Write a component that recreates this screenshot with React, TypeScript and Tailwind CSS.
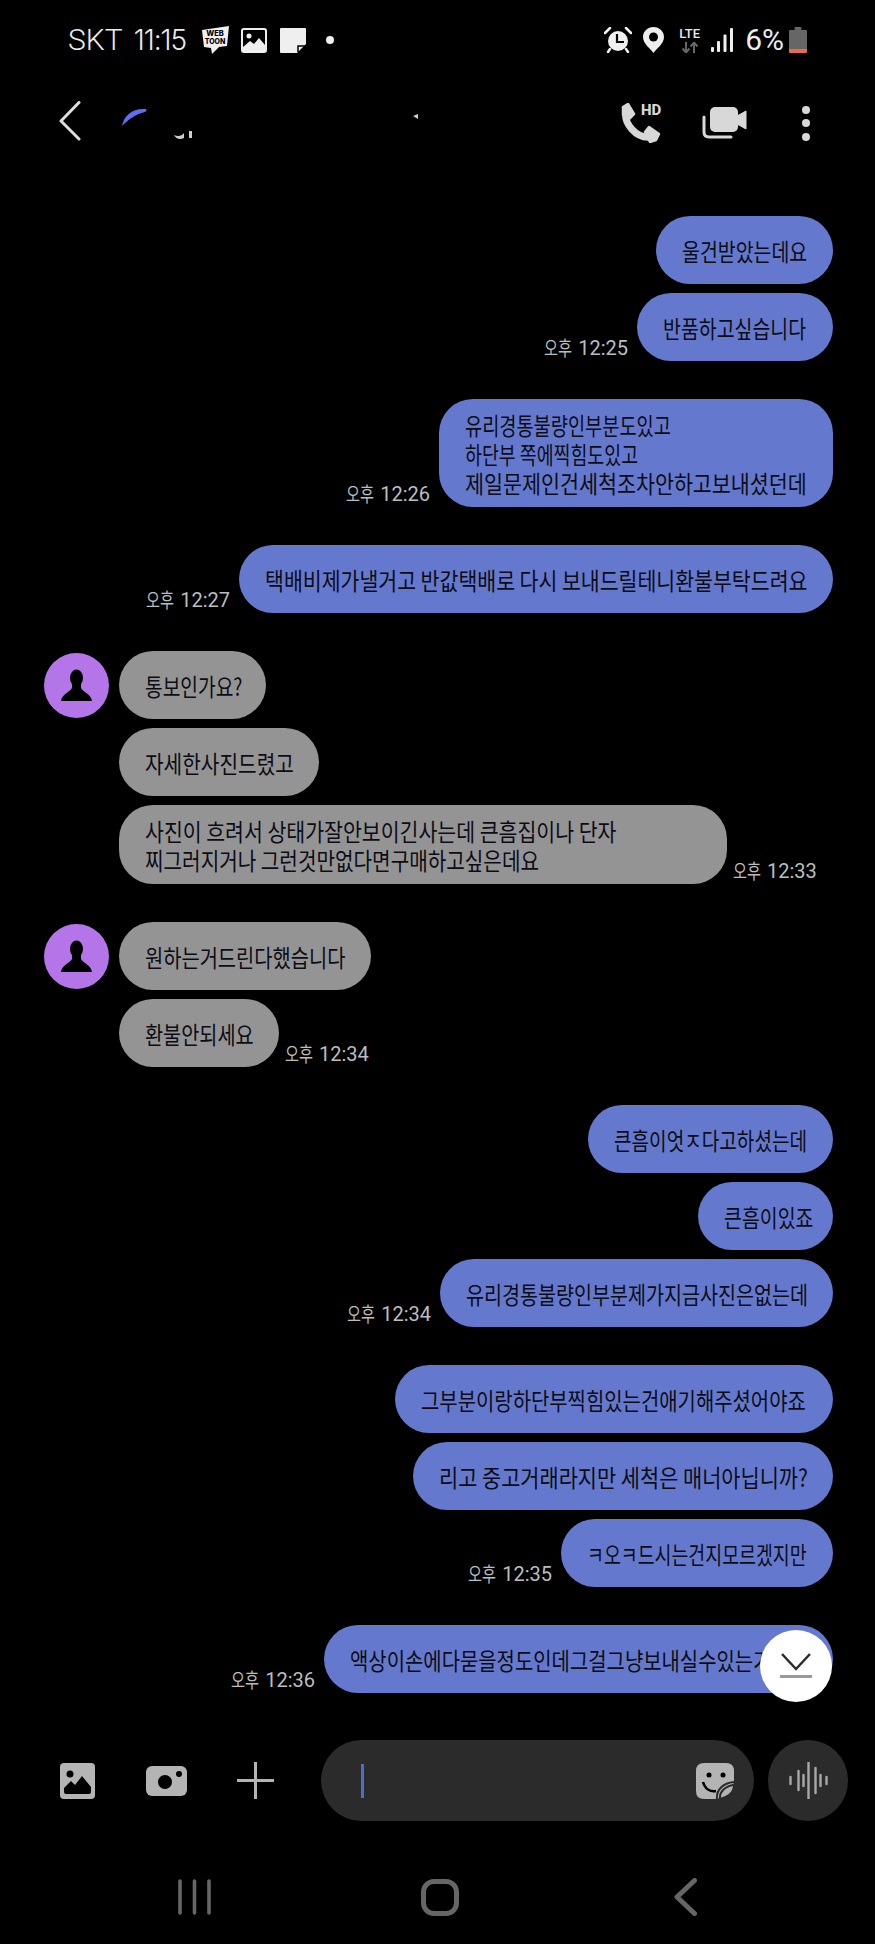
import React from "react";

const KR = "font-['Noto_Sans_CJK_KR',sans-serif]";

function Time({ t }: { t: string }) {
  return (
    <div className="flex items-center gap-[7px] h-[24px] mb-[1px] text-[20px] leading-[24px] text-[#bdbdbd] font-['Roboto',sans-serif] whitespace-nowrap">
      <span className={`inline-block w-[27px] h-[24px] origin-left scale-x-[0.76] ${KR}`}>오후</span>
      <span>{t}</span>
    </div>
  );
}

function Bubble({ lines, w, h = "h-[68px]", blue = true }: { lines: [string, string][]; w: string; h?: string; blue?: boolean }) {
  return (
    <div className={`${w} ${h} ${blue ? "bg-[#6479cd]" : "bg-[#949494]"} rounded-[34px] flex flex-col justify-center pl-[26px] overflow-hidden shrink-0`}>
      {lines.map(([l, sx]) => (
        <div key={l} className={`origin-left ${sx} whitespace-nowrap text-[24px] leading-[29px] text-[#0c0c14] ${KR}`}>{l}</div>
      ))}
    </div>
  );
}

function Out({ time, children }: { time?: string; children: React.ReactNode }) {
  return (
    <div className="flex justify-end items-end gap-[9px] pr-[42px]">
      {time && <Time t={time} />}
      {children}
    </div>
  );
}

function Avatar() {
  return (
    <div className="w-[65px] h-[65px] mt-[2px] rounded-full bg-[#b475e9] shrink-0 flex items-center justify-center">
      <svg width="65" height="65" viewBox="0 0 65 65">
        <ellipse cx="32.5" cy="25" rx="6.500" ry="8.500" fill="#000" />
        <path d="M28 31 L28 35 C26 39 18 41 17 48 L48 48 C47 41 39 39 37 35 L37 31 Z" fill="#000" />
      </svg>
    </div>
  );
}

function Webtoon() {
  return (
    <svg width="29" height="28" viewBox="0 0 29 28">
      <path d="M1 4 L28 0 L26 20 L18 21 L11 28 L10 22 L3 21 Z" fill="#f0f0f0" />
      <text x="14" y="10" textAnchor="middle" fontSize="7.5" fontWeight="800" fontFamily="Inter, sans-serif" fill="#000">WEB</text>
      <text x="14" y="18" textAnchor="middle" fontSize="7" fontWeight="800" fontFamily="Inter, sans-serif" fill="#000">TOON</text>
    </svg>
  );
}

function ImageIcon() {
  return (
    <svg width="26" height="25" viewBox="0 0 26 25">
      <rect x="1" y="1" width="24" height="23" rx="2" fill="#000" stroke="#efefef" strokeWidth="2" />
      <circle cx="8" cy="8" r="2.5" fill="#efefef" />
      <path d="M2 22 L2 19 L9 13 L13 16 L18 10 L24 17 L24 23 L2 23Z" fill="#efefef" />
    </svg>
  );
}

function NoteIcon() {
  return (
    <svg width="26" height="25" viewBox="0 0 26 25">
      <path d="M0 1 Q0 0 1 0 L25 0 Q26 0 26 1 L26 16 L17 25 L1 25 Q0 25 0 24 Z" fill="#efefef" />
      <path d="M25 18 L18 18 L18 24" fill="none" stroke="#000" strokeWidth="1.5" />
    </svg>
  );
}

function AlarmIcon() {
  return (
    <svg width="28" height="26" viewBox="0 0 28 26">
      <path d="M1 6 L6 1 M27 6 L22 1" stroke="#efefef" strokeWidth="2.5" strokeLinecap="round" />
      <path d="M6 22 L4 25 M22 22 L24 25" stroke="#efefef" strokeWidth="2.5" strokeLinecap="round" />
      <circle cx="14" cy="14" r="10" fill="#efefef" />
      <path d="M13 7 L13 15 L20 15" fill="none" stroke="#000" strokeWidth="2.2" />
    </svg>
  );
}

function PinIcon() {
  return (
    <svg width="21" height="26" viewBox="0 0 21 26">
      <path d="M10.5 0 C4.5 0 0 4.5 0 10 C0 17 8 22 10.5 26 C13 22 21 17 21 10 C21 4.5 16.500 0 10.500 0 Z" fill="#efefef" />
      <circle cx="10.5" cy="10" r="4.5" fill="#000" />
    </svg>
  );
}

function LteIcon() {
  return (
    <div className="flex flex-col items-center w-[25px]">
      <span className="text-[13px] leading-[13px] font-medium text-[#e8e8e8] font-['Roboto',sans-serif]">LTE</span>
      <svg width="20" height="11" viewBox="0 0 20 11" className="mt-[2px]">
        <path d="M6 0 V10 M2.500 6.500 L6 10.500 L9.500 6.500" fill="none" stroke="#666" strokeWidth="2" />
        <path d="M14 11 V1 M10.500 4.500 L14 0.500 L17.500 4.500" fill="none" stroke="#666" strokeWidth="2" />
      </svg>
    </div>
  );
}

function SignalIcon() {
  return (
    <svg width="22" height="24" viewBox="0 0 22 24">
      <rect x="0" y="19" width="3" height="5" rx="1" fill="#efefef" />
      <rect x="6" y="13" width="3" height="11" rx="1" fill="#efefef" />
      <rect x="12.500" y="6.500" width="3" height="17.500" rx="1" fill="#efefef" />
      <rect x="19" y="0" width="3" height="24" rx="1" fill="#efefef" />
    </svg>
  );
}

function BatteryIcon() {
  return (
    <svg width="18" height="26" viewBox="0 0 18 26">
      <rect x="5.500" y="0" width="7" height="3" rx="1" fill="#666" />
      <path d="M0 4 Q0 3 1 3 L17 3 Q18 3 18 4 L18 22 L0 22 Z" fill="#666" />
      <path d="M0 22 L18 22 L18 25 Q18 26 17 26 L1 26 Q0 26 0 25 Z" fill="#ea6a4a" />
    </svg>
  );
}

function StatusBar() {
  return (
    <div className="h-[80px] flex items-center justify-between pl-[68px] pr-[68px] text-[#ececec] font-['Roboto',sans-serif] shrink-0">
      <div className="flex items-center">
        <span className="text-[30px] leading-[36px] font-light font-['Roboto',sans-serif]">SKT</span>
        <span className="ml-[11px] w-[55px] text-[28px] leading-[36px] tracking-[-1px] font-['Inter',sans-serif] font-light whitespace-nowrap">11:15</span>
        <div className="ml-[12px]"><Webtoon /></div>
        <div className="ml-[11px]"><ImageIcon /></div>
        <div className="ml-[13px]"><NoteIcon /></div>
        <div className="ml-[20px] w-[8px] h-[8px] rounded-full bg-[#efefef]" />
      </div>
      <div className="flex items-center">
        <AlarmIcon />
        <div className="ml-[11px]"><PinIcon /></div>
        <div className="ml-[13px]"><LteIcon /></div>
        <div className="ml-[9px]"><SignalIcon /></div>
        <span className="ml-[12px] text-[30px] leading-[36px]">6%</span>
        <div className="ml-[5px]"><BatteryIcon /></div>
      </div>
    </div>
  );
}

function PhoneHd() {
  return (
    <svg width="46" height="40" viewBox="0 0 46 40">
      <path d="M6 7 C3 20 16 36 31 34" fill="none" stroke="#d8d8d8" strokeWidth="7" strokeLinecap="round" />
      <path d="M3 4 L8 1 L14 11 L9 16 L3 12 Z" fill="#d8d8d8" stroke="#d8d8d8" strokeWidth="2.500" strokeLinejoin="round" />
      <path d="M25 29 L29 24 L39 31 L36 37 L30 39 Z" fill="#d8d8d8" stroke="#d8d8d8" strokeWidth="2.500" strokeLinejoin="round" />
      <text x="21" y="12" fontSize="15" fontWeight="800" fontFamily="Roboto, sans-serif" fill="#d8d8d8">HD</text>
    </svg>
  );
}

function Video() {
  return (
    <svg width="45" height="32" viewBox="0 0 45 32">
      <rect x="8" y="0" width="28" height="25" rx="5" fill="#d8d8d8" />
      <path d="M35 9 L44 4 L44 22 L35 17Z" fill="#d8d8d8" stroke="#d8d8d8" strokeWidth="1" strokeLinejoin="round" />
      <path d="M2 10 L2 25 Q2 30 7 30 L29 30" fill="none" stroke="#d8d8d8" strokeWidth="3" strokeLinecap="round" />
    </svg>
  );
}

function Header() {
  return (
    <div className="relative h-[86px] shrink-0 flex items-center pl-[59px] pr-[65px]">
      <svg width="22" height="40" viewBox="0 0 22 40" className="mt-[-4px]">
        <path d="M20 1.500 L2 20 L20 38" fill="none" stroke="#dedede" strokeWidth="3" strokeLinecap="round" strokeLinejoin="round" />
      </svg>
      <svg width="300" height="34" viewBox="0 0 300 34" className="absolute left-[120px] top-[27px]">
        <path d="M2 19 C4 8 13 1 25 2 C27 2 27 4 25 5 C16 7 9 12 2 19Z" fill="#626cf2" />
        <path d="M54 28 C58 30 62 29 64 26 L64 31 C60 33 56 32 54 28Z M69 24 L72 24 L72 31 L69 31Z" fill="#cfcfcf" />
        <path d="M293 9 L298 7 L298 12Z" fill="#cfcfcf" />
      </svg>
      <div className="ml-auto flex items-center">
        <PhoneHd />
        <div className="ml-[36px]"><Video /></div>
        <div className="ml-[55px] flex flex-col gap-[5.500px]">
          <div className="w-[8px] h-[8px] rounded-full bg-[#d8d8d8]" />
          <div className="w-[8px] h-[8px] rounded-full bg-[#d8d8d8]" />
          <div className="w-[8px] h-[8px] rounded-full bg-[#d8d8d8]" />
        </div>
      </div>
    </div>
  );
}

function Messages() {
  return (
    <div className="relative h-[1574px] shrink-0 pt-[50px] flex flex-col gap-[38px] overflow-hidden">
      <div className="flex flex-col gap-[9px]">
        <Out><Bubble w="w-[177px]" lines={[["울건받았는데요", "scale-x-[0.81]"]]} /></Out>
        <Out time="12:25"><Bubble w="w-[196px]" lines={[["반품하고싶습니다", "scale-x-[0.81]"]]} /></Out>
      </div>
      <Out time="12:26">
        <Bubble w="w-[394px]" h="h-[108px]" lines={[["유리경통불량인부분도있고", "scale-x-[0.777]"], ["하단부 쪽에찍힘도있고", "scale-x-[0.765]"], ["제일문제인건세척조차안하고보내셨던데", "scale-x-[0.86]"]]} />
      </Out>
      <Out time="12:27">
        <Bubble w="w-[594px]" lines={[["택배비제가낼거고 반값택배로 다시 보내드릴테니환불부탁드려요", "scale-x-[0.855]"]]} />
      </Out>
      <div className="flex gap-[10px] pl-[44px]">
        <Avatar />
        <div className="flex flex-col gap-[9px]">
          <Bubble blue={false} w="w-[147px]" lines={[["통보인가요?", "scale-x-[0.8]"]]} />
          <Bubble blue={false} w="w-[200px]" lines={[["자세한사진드렸고", "scale-x-[0.843]"]]} />
          <div className="flex items-end gap-[6px]">
            <Bubble blue={false} w="w-[608px]" h="h-[79px]" lines={[["사진이 흐려서 상태가잘안보이긴사는데 큰흠집이나 단자", "scale-x-[0.855]"], ["찌그러지거나 그런것만없다면구매하고싶은데요", "scale-x-[0.84]"]]} />
            <Time t="12:33" />
          </div>
        </div>
      </div>
      <div className="flex gap-[10px] pl-[44px]">
        <Avatar />
        <div className="flex flex-col gap-[9px]">
          <Bubble blue={false} w="w-[252px]" lines={[["원하는거드린다했습니다", "scale-x-[0.825]"]]} />
          <div className="flex items-end gap-[6px]">
            <Bubble blue={false} w="w-[160px]" lines={[["환불안되세요", "scale-x-[0.82]"]]} />
            <Time t="12:34" />
          </div>
        </div>
      </div>
      <div className="flex flex-col gap-[9px]">
        <Out><Bubble w="w-[245px]" lines={[["큰흠이엇ㅈ다고하셨는데", "scale-x-[0.795]"]]} /></Out>
        <Out><Bubble w="w-[135px]" lines={[["큰흠이있죠", "scale-x-[0.81]"]]} /></Out>
        <Out time="12:34"><Bubble w="w-[393px]" lines={[["유리경통불량인부분제가지금사진은없는데", "scale-x-[0.815]"]]} /></Out>
      </div>
      <div className="flex flex-col gap-[9px]">
        <Out><Bubble w="w-[438px]" lines={[["그부분이랑하단부찍힘있는건애기해주셨어야죠", "scale-x-[0.83]"]]} /></Out>
        <Out><Bubble w="w-[420px]" lines={[["리고 중고거래라지만 세척은 매너아닙니까?", "scale-x-[0.868]"]]} /></Out>
        <Out time="12:35"><Bubble w="w-[272px]" lines={[["ㅋ오ㅋ드시는건지모르겠지만", "scale-x-[0.765]"]]} /></Out>
      </div>
      <Out time="12:36">
        <Bubble w="w-[509px]" lines={[["액상이손에다묻을정도인데그걸그냥보내실수있는거죠", "scale-x-[0.83]"]]} />
      </Out>
      <div className="absolute right-[43px] bottom-[38px] w-[72px] h-[72px] rounded-full bg-white flex items-center justify-center">
        <svg width="32" height="26" viewBox="0 0 32 26">
          <path d="M2 1 L16 16 L30 1" fill="none" stroke="#2c2c2c" strokeWidth="2.500" />
          <rect x="0" y="22" width="32" height="3" fill="#9a9a9a" />
        </svg>
      </div>
    </div>
  );
}

function Composer() {
  return (
    <div className="h-[81px] shrink-0 flex items-center pl-[60px]">
      <svg width="35" height="36" viewBox="0 0 35 36">
        <rect width="35" height="36" rx="4" fill="#b4b4b4" />
        <circle cx="10" cy="11" r="3.500" fill="#000" />
        <path d="M4 29 L4 25 L11 18 L15 22 L22 13 L31 24 L31 29 Q31 31 29 31 L6 31 Q4 31 4 29Z" fill="#000" />
      </svg>
      <div className="ml-[51px]">
        <svg width="41" height="30" viewBox="0 0 41 30">
          <rect width="41" height="30" rx="6" fill="#b4b4b4" />
          <circle cx="19" cy="16" r="7" fill="#000" />
          <circle cx="33" cy="8" r="3" fill="#000" />
        </svg>
      </div>
      <div className="ml-[50px]">
        <svg width="37" height="37" viewBox="0 0 37 37">
          <path d="M18.500 0 V37 M0 18.500 H37" stroke="#b4b4b4" strokeWidth="3" />
        </svg>
      </div>
      <div className="ml-[47px] w-[433px] h-[81px] rounded-[41px] bg-[#2b2b2b] flex items-center pl-[40px] pr-[20px] justify-between">
        <div className="w-[3px] h-[34px] bg-[#4a6fc4]" />
        <svg width="38" height="36" viewBox="0 0 38 36">
          <path d="M8 0 L30 0 Q38 0 38 8 L38 20 L22 36 L8 36 Q0 36 0 28 L0 8 Q0 0 8 0Z" fill="#b4b4b4" />
          <circle cx="13" cy="12" r="2.500" fill="#000" />
          <circle cx="27" cy="12" r="2.500" fill="#000" />
          <path d="M7 19 C9 26 14 29 20 28" fill="none" stroke="#000" strokeWidth="2.500" />
          <path d="M24 36 C23 29 29 23 38 22 L38 24 C37 30 32 34 24 36Z" fill="#b4b4b4" stroke="#2b2b2b" strokeWidth="2" />
          <path d="M21 36 C20 27 27 20 38 19" fill="none" stroke="#2b2b2b" strokeWidth="2" />
        </svg>
      </div>
      <div className="ml-[14px] w-[80px] h-[81px] rounded-full bg-[#2b2b2b] flex items-center justify-center">
        <svg width="39" height="37" viewBox="0 0 39 37">
          <path d="M1.500 15 V22 M9.500 9 V28 M14.500 13 V24 M19.500 0 V37 M26.500 6 V31 M31.500 13 V24 M37.500 15 V22" stroke="#a8a8a8" strokeWidth="2.400" strokeLinecap="round" />
        </svg>
      </div>
    </div>
  );
}

function NavBar() {
  return (
    <div className="flex items-center pl-[178px] pt-[57px]">
      <svg width="33" height="36" viewBox="0 0 33 36">
        <path d="M2 2 V34 M16.500 2 V34 M31 2 V34" stroke="#666" strokeWidth="3.600" strokeLinecap="round" />
      </svg>
      <div className="ml-[210px] w-[38px] h-[37px] rounded-[13px] border-[5px] border-[#666]" />
      <svg width="23" height="38" viewBox="0 0 23 38" className="ml-[215px]">
        <path d="M20.500 2.500 L3 19 L20.500 35.500" fill="none" stroke="#666" strokeWidth="5" strokeLinecap="round" strokeLinejoin="round" />
      </svg>
    </div>
  );
}

export default function App() {
  return (
    <div className="w-[875px] h-[1944px] bg-black flex flex-col overflow-hidden">
      <StatusBar />
      <Header />
      <Messages />
      <Composer />
      <NavBar />
    </div>
  );
}
